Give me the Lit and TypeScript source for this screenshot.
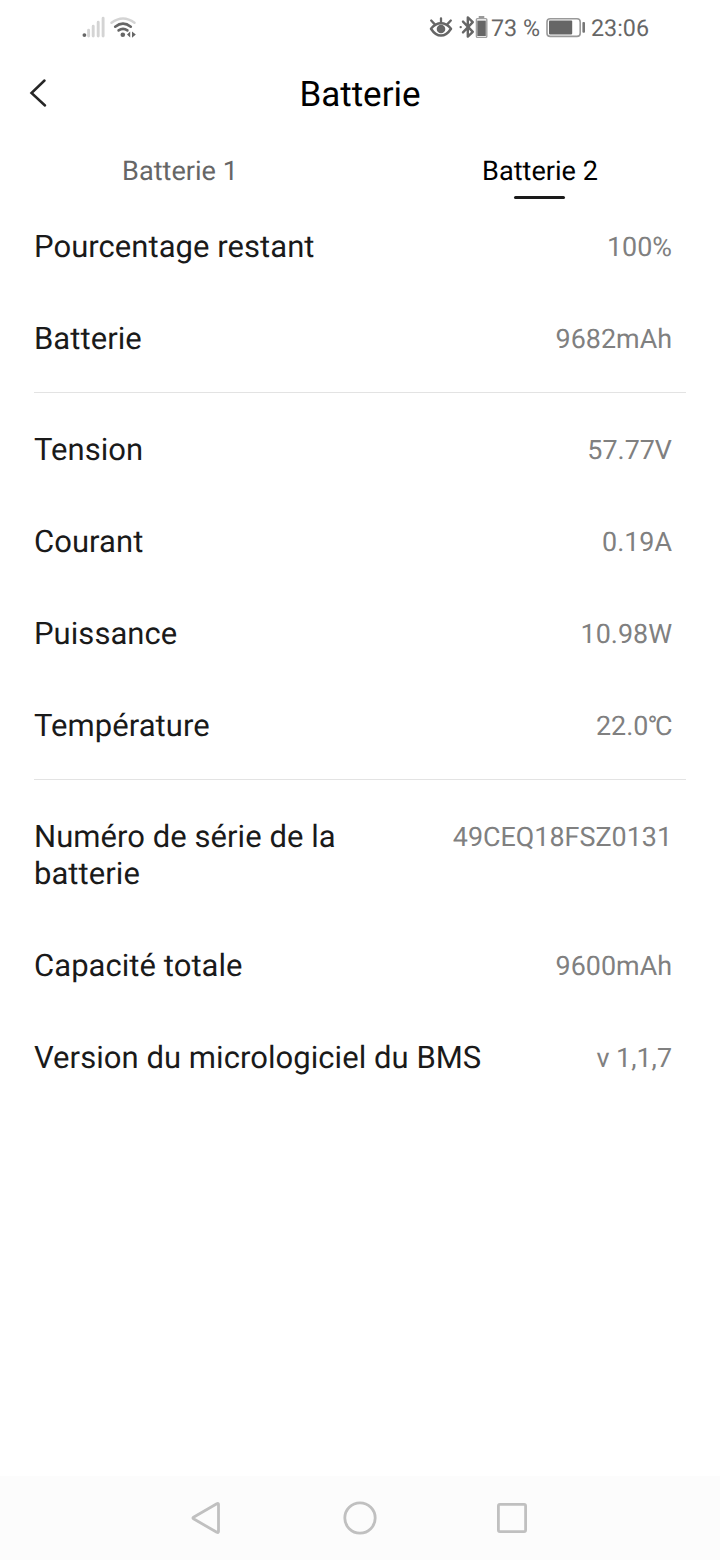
import { LitElement, html, css } from "lit";
import { customElement, property, state } from "lit/decorators.js";

interface Entry {
  label: string;
  value: string;
  unit?: string;
}

const GROUPS: Entry[][] = [
  [
    { label: "Pourcentage restant", value: "100%" },
    { label: "Batterie", value: "9682mAh" },
  ],
  [
    { label: "Tension", value: "57.77V" },
    { label: "Courant", value: "0.19A" },
    { label: "Puissance", value: "10.98W" },
    { label: "Température", value: "22.0", unit: "°C" },
  ],
  [
    { label: "Numéro de série de la batterie", value: "49CEQ18FSZ0131" },
    { label: "Capacité totale", value: "9600mAh" },
    { label: "Version du micrologiciel du BMS", value: "v 1,1,7" },
  ],
];

@customElement("status-bar")
export class StatusBar extends LitElement {
  static styles = css`
    :host {
      display: flex;
      justify-content: space-between;
      height: 56px;
      padding: 0 71px 0 80px;
      box-sizing: border-box;
      color: #666;
      font-size: 23.3px;
      line-height: 56px;
      white-space: nowrap;
    }
    .side {
      display: flex;
    }
    svg {
      display: block;
      height: 56px;
    }
    .percent {
      width: 54px;
      padding-left: 1px;
    }
    .time {
      padding-left: 5px;
    }
  `;

  render() {
    return html`
      <div class="side">
        <svg width="60" height="56" viewBox="80 0 60 56" fill="none">
          <circle cx="84.4" cy="35.1" r="1.9" fill="#666" />
          <path
            d="M88.6 30.3V36M93.2 26.3V36M98.2 22.3V36M103.1 18.3V36"
            stroke="#d4d4d4"
            stroke-width="2.9"
            stroke-linecap="round"
          />
          <path d="M111.5 22.7Q123 14.2 134.5 22.7" stroke="#d4d4d4" stroke-width="2.5" stroke-linecap="round" />
          <path
            d="M115.2 26.7Q123 20.5 130.8 26.7M118.6 30.4Q123 27.2 127.4 30.4"
            stroke="#666"
            stroke-width="2.6"
            stroke-linecap="round"
          />
          <circle cx="122.8" cy="34.8" r="2.3" fill="#666" />
          <path d="M127 34.6L130.2 31.6V37.6ZM135.8 34.6L132 31.4V37.8Z" fill="#666" />
        </svg>
      </div>
      <div class="side">
        <svg width="62" height="56" viewBox="428 0 62 56" fill="none">
          <path
            d="M431 28.7Q435.5 23.2 441 23.2Q446.5 23.2 451 28.7Q446.5 35.6 441 35.6Q435.5 35.6 431 28.7Z"
            stroke="#666"
            stroke-width="2.5"
            stroke-linejoin="round"
          />
          <circle cx="441" cy="29" r="4.3" fill="#666" />
          <path
            d="M441 18.3V23M434.8 24.4L431.2 20.5M447.2 24.4L450.8 20.5"
            stroke="#666"
            stroke-width="2.3"
            stroke-linecap="round"
          />
          <path
            d="M463 21.6L472.8 31.8L467.8 36.6V17.4L472.8 22.2L463 32.4"
            stroke="#666"
            stroke-width="2.4"
            stroke-linejoin="round"
            stroke-linecap="round"
          />
          <circle cx="460.7" cy="27.1" r="1.2" fill="#666" />
          <path d="M478.7 16H484.3V18.4H478.7Z" fill="#999" />
          <rect x="476.4" y="18.6" width="10.4" height="18.8" rx="1" stroke="#a0a0a0" stroke-width="1.4" />
          <rect x="477.3" y="20.6" width="8.5" height="15.4" fill="#666" />
        </svg>
        <span class="percent">73 %</span>
        <svg width="41" height="56" viewBox="545 0 41 56" fill="none">
          <rect x="547" y="18.8" width="33.2" height="17.6" rx="3.2" stroke="#999" stroke-width="1.6" />
          <rect x="549" y="20.6" width="23.2" height="13.8" rx="0.8" fill="#666" />
          <rect x="582.4" y="22" width="2.6" height="10.8" rx="1" fill="#777" />
        </svg>
        <span class="time">23:06</span>
      </div>
    `;
  }
}

@customElement("info-row")
export class InfoRow extends LitElement {
  @property() label = "";
  @property() value = "";
  @property() unit = "";

  static styles = css`
    :host {
      display: flex;
      justify-content: space-between;
      align-items: flex-start;
      gap: 100px;
      padding: 27px 14px 28px 0;
      line-height: 37px;
    }
    .label {
      color: #1a1a1a;
      font-size: 31px;
      letter-spacing: 0.05px;
    }
    .value {
      padding-top: 1px;
      color: #808080;
      font-size: 26.9px;
      line-height: 36px;
      white-space: nowrap;
    }
    .unit {
      margin-left: -1px;
      margin-right: 2px;
      letter-spacing: -2.5px;
    }
  `;

  render() {
    return html`<span class="label">${this.label}</span
      ><span class="value">${this.value}${this.unit ? html`<span class="unit">${this.unit}</span>` : ""}</span>`;
  }
}

@customElement("nav-bar")
export class NavBar extends LitElement {
  static styles = css`
    :host {
      display: flex;
      justify-content: center;
      align-items: center;
      gap: 112px;
      height: 84px;
      background: #fcfcfc;
    }
    svg {
      display: block;
    }
  `;

  render() {
    return html`
      <svg width="40" height="40" viewBox="0 0 40 40" fill="none" stroke="#c0c0c0" stroke-width="2.8" stroke-linejoin="round">
        <path d="M5.5 19.2Q4.3 20 5.5 20.8L28.8 34.3Q30.5 35 30.5 33.5V6.5Q30.5 5 28.8 5.7Z" />
      </svg>
      <svg width="40" height="40" viewBox="0 0 40 40" fill="none" stroke="#c0c0c0" stroke-width="2.8">
        <circle cx="20" cy="20" r="15.2" />
      </svg>
      <svg width="40" height="40" viewBox="0 0 40 40" fill="none" stroke="#c0c0c0" stroke-width="2.8">
        <rect x="6.4" y="6.4" width="27.2" height="27.2" rx="1.5" />
      </svg>
    `;
  }
}

@customElement("app-root")
export class AppRoot extends LitElement {
  @state() private active = 1;

  static styles = css`
    :host {
      display: flex;
      flex-direction: column;
      width: 720px;
      height: 1560px;
      background: #fff;
      font-family: Roboto, "Noto Sans", sans-serif;
      text-rendering: geometricPrecision;
    }
    .header {
      display: grid;
      grid-template-columns: 60px 1fr 60px;
      height: 76px;
      line-height: 76px;
    }
    .back {
      display: block;
    }
    .title {
      padding-top: 1px;
      color: #000;
      font-size: 35px;
      text-align: center;
    }
    .tabs {
      display: grid;
      grid-template-columns: 1fr 1fr;
      height: 69px;
    }
    .tab {
      display: flex;
      flex-direction: column;
      align-items: center;
      gap: 9px;
      padding-top: 23px;
      color: #666;
      font-size: 27.1px;
      line-height: 32px;
    }
    .tab.active {
      color: #000;
    }
    .tab.active::after {
      content: "";
      width: 51px;
      height: 3px;
      margin-right: 1px;
      border-radius: 1.5px;
      background: #1a1a1a;
    }
    .groups {
      flex: 1;
      padding: 0 34px;
    }
    .group + .group {
      margin-top: 7px;
      padding-top: 11px;
      border-top: 1px solid #e3e3e3;
    }
  `;

  render() {
    return html`
      <status-bar></status-bar>
      <div class="header">
        <svg class="back" width="60" height="76" viewBox="0 56 60 76" fill="none">
          <path d="M44.5 80.5L31.5 93L45 105.5" stroke="#262626" stroke-width="2.5" stroke-linecap="round" />
        </svg>
        <div class="title">Batterie</div>
      </div>
      <div class="tabs">
        ${["Batterie 1", "Batterie 2"].map(
          (name, i) => html`<div class="tab ${i === this.active ? "active" : ""}" @click=${() => (this.active = i)}>${name}</div>`
        )}
      </div>
      <div class="groups">
        ${GROUPS.map(
          (group) => html`<div class="group">
            ${group.map((e) => html`<info-row .label=${e.label} .value=${e.value} .unit=${e.unit ?? ""}></info-row>`)}
          </div>`
        )}
      </div>
      <nav-bar></nav-bar>
    `;
  }
}
